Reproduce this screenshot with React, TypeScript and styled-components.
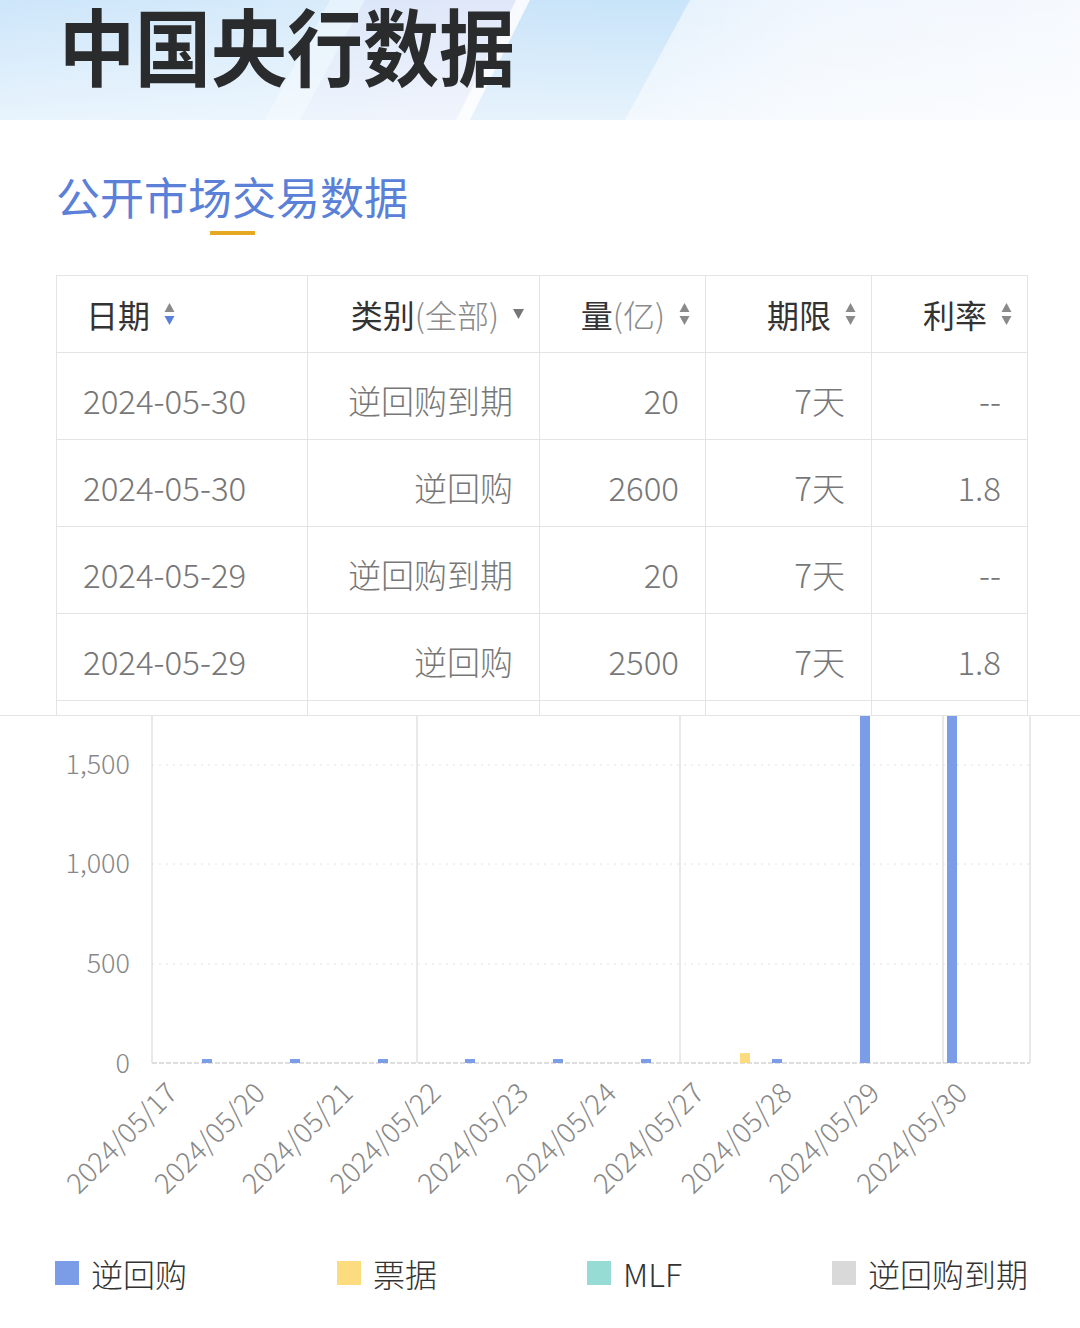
import styled, { createGlobalStyle } from 'styled-components';

const GlobalStyle = createGlobalStyle`
  body {
    margin: 0;
    background: #ffffff;
    font-family: 'Noto Sans CJK SC', 'Noto Sans', sans-serif;
  }
`;

const Page = styled.div`
  width: 1080px;
  background: #ffffff;
  overflow: hidden;
`;

const Banner = styled.header`
  position: relative;
  height: 120px;
  overflow: hidden;
  background: #e4f1fc;
`;

const BannerArt = styled.svg`
  position: absolute;
  left: 0;
  top: 0;
`;

const BannerTitle = styled.h1`
  position: relative;
  margin: 0;
  padding-left: 59px;
  font-family: 'Noto Sans CJK SC', sans-serif;
  font-weight: 700;
  font-size: 76px;
  line-height: 80px;
  color: #2a2b2d;
  transform: scaleY(1.1);
  transform-origin: top left;
`;

const SectionHead = styled.div`
  display: inline-flex;
  flex-direction: column;
  align-items: center;
  margin: 46px 0 0 56px;
`;

const SectionTitle = styled.h2`
  margin: 0;
  font-weight: 400;
  font-size: 44px;
  line-height: 60px;
  color: #5a80d8;
`;

const Underline = styled.span`
  display: block;
  width: 45px;
  height: 4px;
  margin-top: 5px;
  background: #e7a923;
`;

const TableWrap = styled.div`
  margin: 40px 52px 0 56px;
  height: 439px;
  overflow: hidden;
  border-top: 1px solid #e4e4e4;
  border-left: 1px solid #e4e4e4;
`;

const Grid = styled.div`
  display: grid;
  grid-template-columns: 251px 232px 166px 166px 156px;
`;

const Cell = styled.div<{ $align?: 'left' | 'right'; $head?: boolean }>`
  display: flex;
  align-items: center;
  justify-content: ${(p) => (p.$align === 'left' ? 'flex-start' : 'flex-end')};
  height: ${(p) => (p.$head ? '77px' : '87px')};
  padding: ${(p) =>
    p.$head
      ? p.$align === 'left'
        ? '0 0 0 29px'
        : '0 15px 0 0'
      : p.$align === 'left'
      ? '8px 0 0 26px'
      : '8px 26px 0 0'};
  box-sizing: border-box;
  border-right: 1px solid #e4e4e4;
  border-bottom: 1px solid #e4e4e4;
  font-size: ${(p) => (p.$head ? '32px' : '33px')};
  font-weight: ${(p) => (p.$head ? 400 : 300)};
  color: ${(p) => (p.$head ? '#333333' : '#777777')};
  white-space: nowrap;
`;

const Muted = styled.span`
  color: #8a8a8a;
  font-weight: 300;
`;

const IconSlot = styled.span`
  display: inline-flex;
  margin-left: 14px;
`;

const ChartArea = styled.section`
  border-top: 1px solid #e4e4e4;
`;

const Legend = styled.div`
  display: flex;
  justify-content: space-between;
  align-items: center;
  height: 40px;
  margin-top: 12px;
  padding: 0 52px 0 55px;
`;

const LegendItem = styled.div`
  display: flex;
  align-items: center;
  gap: 12px;
  font-size: 32px;
  font-weight: 300;
  color: #333333;
`;

const Swatch = styled.span<{ $color: string }>`
  width: 24px;
  height: 24px;
  background: ${(p) => p.$color};
`;

const SortIcon = ({ active }: { active?: 'up' | 'down' }) => (
  <svg width="11" height="24" viewBox="0 0 11 24">
    <polygon points="5.5,1 10.5,10 0.5,10" fill={active === 'up' ? '#5a80d8' : '#8a8a8a'} />
    <polygon points="0.5,14 10.5,14 5.5,23" fill={active === 'down' ? '#5a80d8' : '#8a8a8a'} />
  </svg>
);

const FilterIcon = () => (
  <svg width="11" height="10" viewBox="0 0 11 10">
    <polygon points="0,0 11,0 5.5,10" fill="#777777" />
  </svg>
);

const rows = [
  ['2024-05-30', '逆回购到期', '20', '7天', '--'],
  ['2024-05-30', '逆回购', '2600', '7天', '1.8'],
  ['2024-05-29', '逆回购到期', '20', '7天', '--'],
  ['2024-05-29', '逆回购', '2500', '7天', '1.8'],
  ['2024-05-28', '逆回购到期', '20', '7天', '--'],
  ['2024-05-28', '逆回购', '20', '7天', '1.8'],
];

const dates = [
  '2024/05/17',
  '2024/05/20',
  '2024/05/21',
  '2024/05/22',
  '2024/05/23',
  '2024/05/24',
  '2024/05/27',
  '2024/05/28',
  '2024/05/29',
  '2024/05/30',
];

const BLUE = '#7b9de8';
const YELLOW = '#fddc80';
const TEAL = '#96dcd4';
const GRAY = '#d9d9d9';

// y of value 0 inside the chart svg, 500 units = 99.5px
const BASE = 347;
const yOf = (v: number) => BASE - (v / 500) * 99.5;

const bars = [
  { x: 202, v: 20, c: BLUE },
  { x: 290, v: 20, c: BLUE },
  { x: 378, v: 20, c: BLUE },
  { x: 465, v: 20, c: BLUE },
  { x: 553, v: 20, c: BLUE },
  { x: 641, v: 20, c: BLUE },
  { x: 740, v: 50, c: YELLOW },
  { x: 772, v: 20, c: BLUE },
  { x: 860, v: 2500, c: BLUE },
  { x: 947, v: 2600, c: BLUE },
];

function Chart() {
  return (
    <svg width="1080" height="520" viewBox="0 0 1080 520">
      {[49, 148, 248].map((y) => (
        <line key={y} x1="152" x2="1030" y1={y} y2={y} stroke="#e2e2e2" strokeDasharray="2 5" />
      ))}
      {[152, 417, 680, 943, 1030].map((x) => (
        <line key={x} x1={x} x2={x} y1="0" y2={BASE} stroke="#e2e2e2" strokeWidth="1.5" />
      ))}
      <line x1="152" x2="1030" y1={BASE} y2={BASE} stroke="#d4d4d4" strokeDasharray="5 2" strokeWidth="1.5" />
      {[
        ['1,500', 46],
        ['1,000', 145],
        ['500', 245],
        ['0', BASE - 2],
      ].map(([t, y]) => (
        <text
          key={t}
          x="130"
          y={y}
          textAnchor="end"
          dominantBaseline="central"
          fontSize="27"
          fill="#888888"
          fontFamily="'Noto Sans CJK SC', sans-serif"
          fontWeight="300"
        >
          {t}
        </text>
      ))}
      {bars.map((b) => {
        const top = Math.max(0, yOf(b.v));
        return <rect key={b.x} x={b.x} y={top} width="10" height={BASE - top} fill={b.c} />;
      })}
      {dates.map((d, i) => {
        const ax = 179 + 87.8 * i;
        const ay = 379;
        return (
          <text
            key={d}
            x={ax}
            y={ay}
            textAnchor="end"
            fontSize="28"
            fill="#888888"
            fontFamily="'Noto Sans CJK SC', sans-serif"
            fontWeight="300"
            transform={`rotate(-45 ${ax} ${ay})`}
          >
            {d}
          </text>
        );
      })}
    </svg>
  );
}

export default function App() {
  return (
    <Page>
      <GlobalStyle />
      <Banner>
        <BannerArt width="1080" height="120" viewBox="0 0 1080 120">
          <defs>
            <linearGradient id="bg" x1="0" x2="1" y1="0" y2="0">
              <stop offset="0" stopColor="#cde6fa" />
              <stop offset="0.3" stopColor="#d7ebfb" />
              <stop offset="0.45" stopColor="#e2eafa" />
              <stop offset="0.6" stopColor="#d4eafb" />
              <stop offset="0.75" stopColor="#ecf5fd" />
              <stop offset="1" stopColor="#f8fbff" />
            </linearGradient>
            <linearGradient id="fade" x1="0" x2="0" y1="0" y2="1">
              <stop offset="0" stopColor="#ffffff" stopOpacity="0" />
              <stop offset="1" stopColor="#ffffff" stopOpacity="0.55" />
            </linearGradient>
          </defs>
          <rect width="1080" height="120" fill="url(#bg)" />
          <polygon points="330,0 365,0 300,120 265,120" fill="#ffffff" opacity="0.35" />
          <polygon points="365,0 520,0 460,120 300,120" fill="#dfe3f7" opacity="0.55" />
          <polygon points="516,0 530,0 470,120 456,120" fill="#ffffff" opacity="0.75" />
          <polygon points="530,0 690,0 625,120 470,120" fill="#c4e2f9" opacity="0.8" />
          <polygon points="690,0 1080,0 1080,120 625,120" fill="#f3f8fe" opacity="0.5" />
          <rect width="1080" height="120" fill="url(#fade)" />
        </BannerArt>
        <BannerTitle>中国央行数据</BannerTitle>
      </Banner>

      <SectionHead>
        <SectionTitle>公开市场交易数据</SectionTitle>
        <Underline />
      </SectionHead>

      <TableWrap>
        <Grid>
          <Cell $head $align="left">
            日期
            <IconSlot>
              <SortIcon active="down" />
            </IconSlot>
          </Cell>
          <Cell $head>
            类别<Muted>(全部)</Muted>
            <IconSlot>
              <FilterIcon />
            </IconSlot>
          </Cell>
          <Cell $head>
            量<Muted>(亿)</Muted>
            <IconSlot>
              <SortIcon />
            </IconSlot>
          </Cell>
          <Cell $head>
            期限
            <IconSlot>
              <SortIcon />
            </IconSlot>
          </Cell>
          <Cell $head>
            利率
            <IconSlot>
              <SortIcon />
            </IconSlot>
          </Cell>
          {rows.map((r, i) =>
            r.map((v, j) => (
              <Cell key={`${i}-${j}`} $align={j === 0 ? 'left' : 'right'}>
                {v}
              </Cell>
            ))
          )}
        </Grid>
      </TableWrap>

      <ChartArea>
        <Chart />
        <Legend>
          <LegendItem>
            <Swatch $color={BLUE} />
            逆回购
          </LegendItem>
          <LegendItem>
            <Swatch $color={YELLOW} />
            票据
          </LegendItem>
          <LegendItem>
            <Swatch $color={TEAL} />
            MLF
          </LegendItem>
          <LegendItem>
            <Swatch $color={GRAY} />
            逆回购到期
          </LegendItem>
        </Legend>
      </ChartArea>
    </Page>
  );
}
